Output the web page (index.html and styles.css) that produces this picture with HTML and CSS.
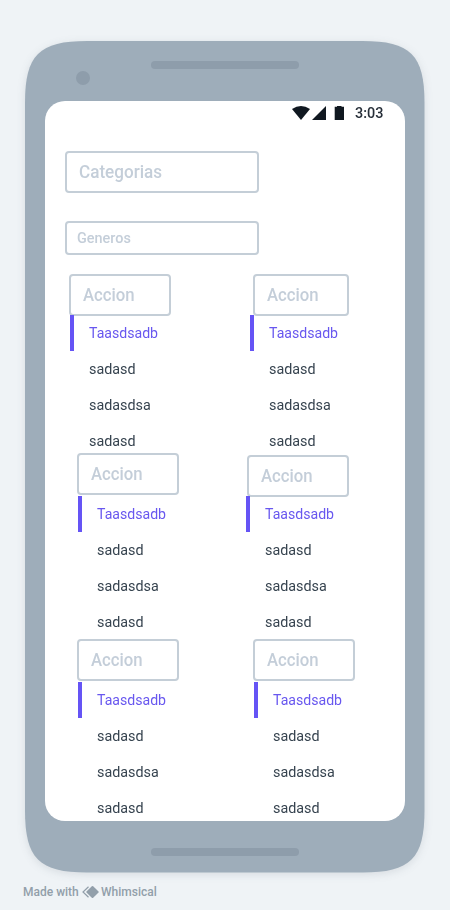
FILE: index.html
```html
<!DOCTYPE html>
<html lang="es">
<head>
<meta charset="utf-8">
<title>Categorias</title>
<link rel="stylesheet" href="styles.css">
</head>
<body>
<main class="phone">
  <svg class="shell" width="400" height="832" viewBox="0 0 400 832" aria-hidden="true">
    <path d="M0 62C0 14 14 0 62 0H337.5C385.5 0 399.5 14 399.5 62V769.5C399.5 817.5 385.5 831.5 337.5 831.5H62C14 831.5 0 817.5 0 769.5Z" fill="#9eadba"/>
  </svg>
  <header class="top"><span class="camera"></span><span class="speaker"></span></header>
  <section class="screen">
    <div class="status">
      <svg width="54" height="14" viewBox="0 0 54 14" fill="#101820" aria-hidden="true">
        <path d="M0 3Q9-3 18 3L9 14Z"/>
        <path d="M34 0V14H20Z"/>
        <path d="M42.700 .8H45V0H49.500V.8H52V14H42.700Z"/>
      </svg>
      <span class="clock">3:03</span>
    </div>
    <div class="field categories"><span>Categorias</span></div>
    <div class="field genres"><span>Generos</span></div>
    <div class="columns">
      <div class="column">
        <div class="group l1"><div class="field title"><span>Accion</span></div>
          <ul class="list"><li class="active"><span>Taasdsadb</span></li><li><span>sadasd</span></li><li><span>sadasdsa</span></li><li><span>sadasd</span></li></ul></div>
        <div class="group l2"><div class="field title"><span>Accion</span></div>
          <ul class="list"><li class="active"><span>Taasdsadb</span></li><li><span>sadasd</span></li><li><span>sadasdsa</span></li><li><span>sadasd</span></li></ul></div>
        <div class="group l3"><div class="field title"><span>Accion</span></div>
          <ul class="list"><li class="active"><span>Taasdsadb</span></li><li><span>sadasd</span></li><li><span>sadasdsa</span></li><li><span>sadasd</span></li></ul></div>
      </div>
      <div class="column">
        <div class="group r1"><div class="field title"><span>Accion</span></div>
          <ul class="list"><li class="active"><span>Taasdsadb</span></li><li><span>sadasd</span></li><li><span>sadasdsa</span></li><li><span>sadasd</span></li></ul></div>
        <div class="group r2"><div class="field title"><span>Accion</span></div>
          <ul class="list"><li class="active"><span>Taasdsadb</span></li><li><span>sadasd</span></li><li><span>sadasdsa</span></li><li><span>sadasd</span></li></ul></div>
        <div class="group r3"><div class="field title"><span>Accion</span></div>
          <ul class="list"><li class="active"><span>Taasdsadb</span></li><li><span>sadasd</span></li><li><span>sadasdsa</span></li><li><span>sadasd</span></li></ul></div>
      </div>
    </div>
  </section>
  <span class="speaker bottom"></span>
</main>
<footer class="credit">
  <span class="made">Made with</span>
  <svg width="17" height="12" viewBox="0 0 17 12" aria-hidden="true">
    <path d="M6.500 .7L1 6L6.500 11.300" fill="none" stroke="#929faa" stroke-width="1.200"/>
    <path d="M9.800 .2Q10.500-.2 11.200 .2L16.500 5.400Q17 6 16.500 6.600L11.200 11.800Q10.500 12.200 9.800 11.800L4.500 6.600Q4 6 4.500 5.400Z" fill="#929faa"/>
  </svg>
  <span class="brand">Whimsical</span>
</footer>
</body>
</html>
```

FILE: styles.css
```css
* { box-sizing: border-box; }
body {
  margin: 0;
  width: 450px;
  height: 910px;
  overflow: hidden;
  background: #eff3f6;
  font-family: Roboto, "Liberation Sans", sans-serif;
}
.phone {
  position: relative;
  width: 400px;
  height: 832px;
  margin: 41px 0 0 25px;
}
.shell {
  position: absolute;
  z-index: -1;
  filter: drop-shadow(0 2px 4px rgba(40, 55, 70, .12));
}
.top {
  display: flex;
  height: 60px;
  padding: 20px 0 0 51px;
}
.camera {
  width: 14px;
  height: 14px;
  margin: 10px 61px 0 0;
  border-radius: 50%;
  background: #8e9dab;
}
.speaker {
  display: block;
  width: 148px;
  height: 8px;
  border-radius: 4px;
  background: #8e9dab;
}
.speaker.bottom { margin: 27.800px 0 0 126px; }
.screen {
  width: 359.7px;
  height: 719.6px;
  margin-left: 20px;
  overflow: hidden;
  border-radius: 20px;
  background: #fff;
}
.status {
  display: flex;
  height: 50px;
  padding: 5px 0 0 247px;
}
.clock {
  margin-left: 9px;
  color: #272f39;
  font-size: 15px;
  font-weight: 500;
  line-height: 15px;
  transform: scaleX(.96);
  transform-origin: left;
}
.field {
  display: flex;
  align-items: center;
  border: 2px solid #c4ced7;
  border-radius: 4px;
  color: #c4ced9;
  font-weight: 500;
}
.field span {
  transform: scaleX(.93);
  transform-origin: left;
}
.categories {
  width: 194px;
  height: 42px;
  margin-left: 20px;
  padding: 0 0 2px 12px;
  font-size: 18px;
}
.categories span { transform: scaleX(.95); }
.genres {
  width: 194px;
  height: 34px;
  margin: 28px 0 0 20px;
  padding-left: 10px;
  font-size: 15.500px;
}
.columns {
  display: grid;
  grid-template-columns: 177px 1fr;
  padding: 19px 0 0 24px;
}
.title {
  width: 102px;
  height: 42px;
  padding: 0 0 2px 12px;
  font-size: 18px;
}
.list {
  margin: 0;
  padding: 0;
  list-style: none;
  color: #36434f;
  font-size: 15.500px;
}
.list li {
  height: 36px;
  padding-left: 15px;
  border-left: 4px solid transparent;
  line-height: 36px;
}
.list span {
  display: inline-block;
  transform: scaleX(.925);
  transform-origin: left;
}
.list .active {
  border-color: #6554f5;
  color: #6857ef;
}
.list .active span { transform: scaleX(.91); }
.l1 .list { margin: -1px 0 0 1px; }
.l2 { margin: -6px 0 0 8px; }
.l2 .list, .l3 .list { margin: 1px 0 0 1px; }
.l3 { margin: -1px 0 0 8px; }
.r1 .title { width: 96px; margin-left: 7px; }
.r1 .list { margin: -1px 0 0 4px; }
.r2 { margin: -4px 0 0 1px; }
.r2 .list { margin: -1px 0 0 -1px; }
.r3 { margin: -1px 0 0 7px; }
.r3 .list { margin: 1px 0 0 1px; }
.credit {
  display: flex;
  align-items: center;
  height: 14px;
  margin: 12px 0 0 23px;
  color: #929faa;
  font-size: 12px;
  font-weight: 500;
}
.made { width: 59px; }
.brand { margin-left: 2px; }
```
